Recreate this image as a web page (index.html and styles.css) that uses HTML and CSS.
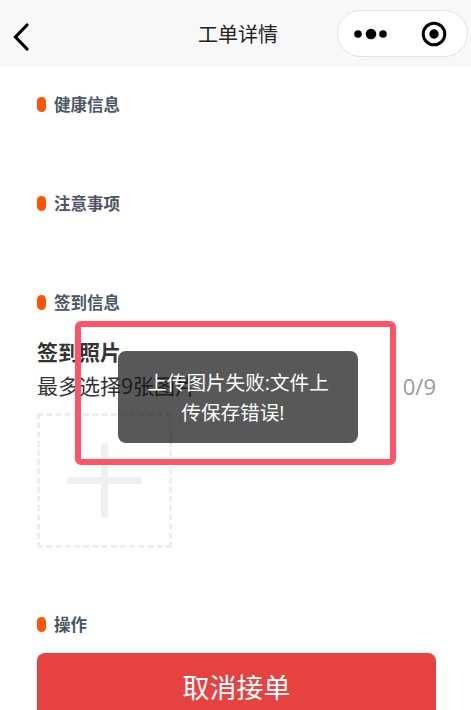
FILE: index.html
```html
<!DOCTYPE html>
<html lang="zh-CN">

<head>
    <meta charset="UTF-8">
    <meta name="viewport" content="width=device-width, initial-scale=1.0">
    <title>工单详情</title>
    <link rel="stylesheet" href="styles.css">
</head>

<body>
    <div class="page">
        <!-- 导航栏 -->
        <div class="nav">
            <a href="#" class="nav-back">
                <svg width="30" height="36" viewBox="0 0 30 36">
                    <path d="M27 7 L15.500 19 L27 31" fill="none" stroke="#000" stroke-width="3.200" stroke-linecap="round" stroke-linejoin="miter"/>
                </svg>
            </a>
            <div class="nav-title">工单详情</div>
            <div class="capsule">
                <svg width="131" height="47" viewBox="0 0 131 47">
                    <circle cx="21" cy="24" r="3.800" fill="#000"/>
                    <circle cx="34" cy="24" r="5.300" fill="#000"/>
                    <circle cx="46" cy="24" r="3.800" fill="#000"/>
                    <circle cx="97" cy="24" r="10.800" fill="none" stroke="#000" stroke-width="3"/>
                    <circle cx="97" cy="24" r="4.700" fill="#000"/>
                </svg>
            </div>
        </div>

        <div class="section section-empty">
            <div class="section-title">健康信息</div>
        </div>
        <div class="section section-empty">
            <div class="section-title">注意事项</div>
        </div>

        <div class="section section-sign">
            <div class="section-title">签到信息</div>
            <div class="photo-name">签到照片</div>
            <div class="photo-tip">
                <span>最多选择9张图片</span>
                <span class="photo-count">0/9</span>
            </div>
            <div class="uploader"><i class="plus"></i></div>
        </div>

        <div class="section">
            <div class="section-title">操作</div>
            <a href="#" class="btn-cancel">取消接单</a>
        </div>

        <!-- 标注框 -->
        <div class="mark"></div>
        <!-- 提示 -->
        <div class="toast">上传图片失败:文件上传保存错误!&nbsp;&nbsp;</div>
    </div>
</body>

</html>
```

FILE: styles.css
```css
* {
    margin: 0;
    padding: 0;
    box-sizing: border-box;
}

a {
    text-decoration: none;
}

body {
    font-family: "Open Sans", "Noto Sans CJK SC", sans-serif;
    background: #fff;
}

.page {
    position: relative;
    width: 471px;
    height: 710px;
    overflow: hidden;
}

.nav {
    display: grid;
    grid-template-columns: 1fr auto 1fr;
    align-items: center;
    height: 67px;
    padding: 0 3px 6px 0;
    background: #f8f8f8;
}

.nav-back {
    display: block;
    height: 36px;
    margin-top: 11px;
}

.nav-title {
    font-size: 20px;
    line-height: 28px;
    margin: 8px 0 0 8px;
    color: #222;
}

.capsule {
    justify-self: end;
    width: 131px;
    height: 47px;
    margin-top: 6px;
    background: #fff;
    border: 1px solid #e2e2e2;
    border-radius: 24px;
}

.capsule svg {
    display: block;
    margin: -1px;
}

.section {
    padding: 0 35px 0 37px;
}

.section-empty {
    height: 99px;
    padding-top: 25px;
}

.section-sign {
    height: 347px;
    padding-top: 25px;
}

.section-title {
    display: flex;
    align-items: center;
    height: 25px;
    font-size: 16.500px;
    line-height: 24px;
    font-weight: bold;
    color: #4b5563;
}

.section-title::before {
    content: "";
    width: 9px;
    height: 15px;
    margin-right: 8px;
    border-radius: 5px;
    background: #ff5500;
}

.photo-name {
    margin-top: 23px;
    font-size: 21px;
    line-height: 28px;
    font-weight: bold;
    color: #333;
}

.photo-tip {
    display: flex;
    justify-content: space-between;
    align-items: center;
    margin-top: 6px;
    font-size: 21px;
    line-height: 28px;
    color: #333;
}

.photo-count {
    font-size: 22px;
    color: #999;
}

.uploader {
    display: flex;
    align-items: center;
    justify-content: center;
    width: 135px;
    height: 135px;
    margin-top: 13px;
    border: 3px dashed #eee;
    border-radius: 3px;
}

.plus {
    position: relative;
    display: block;
    width: 75px;
    height: 7px;
    border-radius: 4px;
    background: #f0f0f0;
}

.plus::after {
    content: "";
    position: absolute;
    top: -34px;
    left: 34px;
    width: 7px;
    height: 75px;
    border-radius: 4px;
    background: #f0f0f0;
}

.btn-cancel {
    display: block;
    height: 70px;
    margin-top: 16px;
    border-radius: 8px;
    background: #e64340;
    color: #fff;
    font-size: 27px;
    line-height: 70px;
    text-align: center;
}

.mark {
    position: absolute;
    top: 321px;
    left: 75px;
    width: 321px;
    height: 144px;
    border: 6px solid #ff5368;
    border-radius: 6px;
}

.toast {
    position: absolute;
    top: 351px;
    left: 118px;
    width: 240px;
    height: 92px;
    padding: 17px 24px;
    border-radius: 8px;
    background: rgba(17, 17, 17, .7);
    color: #fff;
    font-size: 19.600px;
    line-height: 30px;
    text-align: center;
}
```
